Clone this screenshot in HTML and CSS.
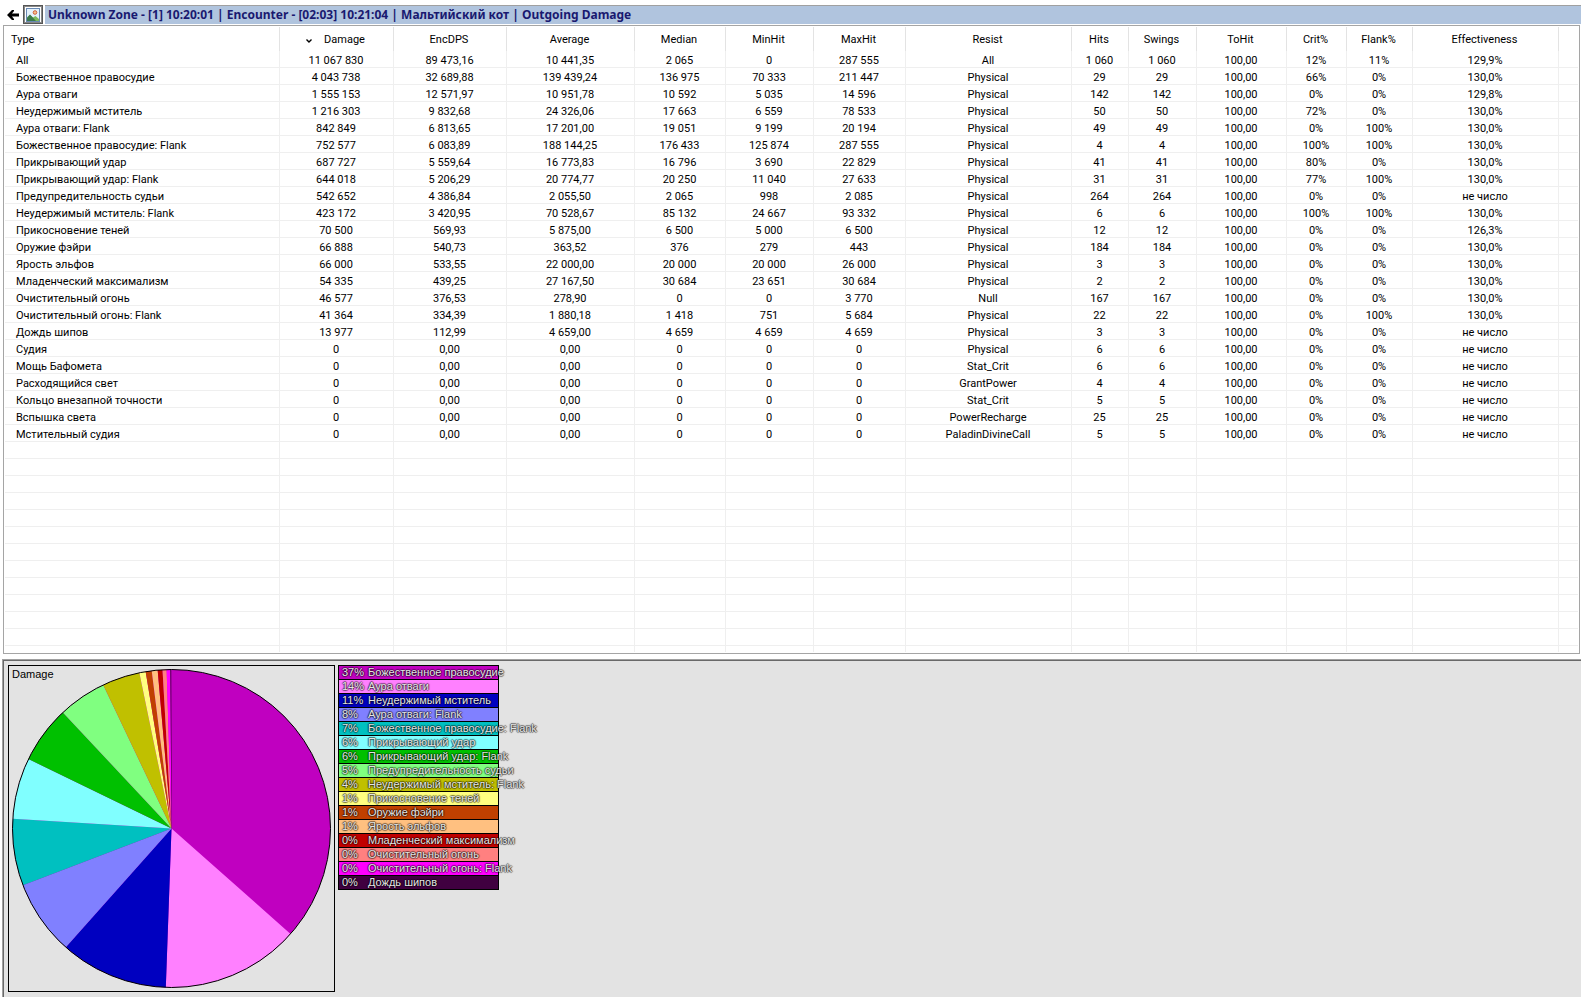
FILE: index.html
```
<!DOCTYPE html>
<html lang="ru">
<head>
<meta charset="utf-8">
<title>Outgoing Damage</title>
<link rel="stylesheet" href="styles.css">
</head>
<body>
<header class="bar">
  <button class="back" aria-label="Back"><svg width="12" height="10" viewBox="0 0 12 10"><path d="M0 5 5 0h2v1L5 3.500h7v3H5L7 9v1H5z"/></svg></button>
  <button class="picture" aria-label="Graph"><svg width="14" height="14" viewBox="0 0 14 14"><rect x=".5" y=".5" width="13" height="13" fill="#e4f1fb" stroke="#6a8ab4"/><path d="M1 10 4 7l3 2.500L9.500 8 13 11v2H1z" fill="#7cba5c"/><path d="M1 9.500 4 6.500 10 13H1z" fill="#3a7a4a"/><circle cx="9" cy="4.500" r="1.800" fill="#f6c08a" stroke="#d0603c"/></svg></button>
  <h1 class="title">Unknown Zone - [1] 10:20:01 | Encounter - [02:03] 10:21:04 | Мальтийский кот | Outgoing Damage</h1>
</header>
<main class="list">
<table class="grid">
<colgroup><col class="c-type"><col class="c-damage"><col class="c-dps"><col class="c-avg"><col class="c-med"><col class="c-min"><col class="c-max"><col class="c-resist"><col class="c-hits"><col class="c-swings"><col class="c-tohit"><col class="c-crit"><col class="c-flank"><col class="c-eff"><col></colgroup>
<thead><tr><th>Type</th><th class="sorted"><svg class="arrow" width="6" height="4" viewBox="0 0 6 4"><path d="M.5.5 3 3 5.500.5" fill="none" stroke="#000" stroke-width="1.400"/></svg>Damage</th><th>EncDPS</th><th>Average</th><th>Median</th><th>MinHit</th><th>MaxHit</th><th>Resist</th><th>Hits</th><th>Swings</th><th>ToHit</th><th>Crit%</th><th>Flank%</th><th>Effectiveness</th><th></th></tr></thead>
<tbody>
<tr><td>All<td>11 067 830<td>89 473,16<td>10 441,35<td>2 065<td>0<td>287 555<td>All<td>1 060<td>1 060<td>100,00<td>12%<td>11%<td>129,9%<td></tr>
<tr><td>Божественное правосудие<td>4 043 738<td>32 689,88<td>139 439,24<td>136 975<td>70 333<td>211 447<td>Physical<td>29<td>29<td>100,00<td>66%<td>0%<td>130,0%<td></tr>
<tr><td>Аура отваги<td>1 555 153<td>12 571,97<td>10 951,78<td>10 592<td>5 035<td>14 596<td>Physical<td>142<td>142<td>100,00<td>0%<td>0%<td>129,8%<td></tr>
<tr><td>Неудержимый мститель<td>1 216 303<td>9 832,68<td>24 326,06<td>17 663<td>6 559<td>78 533<td>Physical<td>50<td>50<td>100,00<td>72%<td>0%<td>130,0%<td></tr>
<tr><td>Аура отваги: Flank<td>842 849<td>6 813,65<td>17 201,00<td>19 051<td>9 199<td>20 194<td>Physical<td>49<td>49<td>100,00<td>0%<td>100%<td>130,0%<td></tr>
<tr><td>Божественное правосудие: Flank<td>752 577<td>6 083,89<td>188 144,25<td>176 433<td>125 874<td>287 555<td>Physical<td>4<td>4<td>100,00<td>100%<td>100%<td>130,0%<td></tr>
<tr><td>Прикрывающий удар<td>687 727<td>5 559,64<td>16 773,83<td>16 796<td>3 690<td>22 829<td>Physical<td>41<td>41<td>100,00<td>80%<td>0%<td>130,0%<td></tr>
<tr><td>Прикрывающий удар: Flank<td>644 018<td>5 206,29<td>20 774,77<td>20 250<td>11 040<td>27 633<td>Physical<td>31<td>31<td>100,00<td>77%<td>100%<td>130,0%<td></tr>
<tr><td>Предупредительность судьи<td>542 652<td>4 386,84<td>2 055,50<td>2 065<td>998<td>2 085<td>Physical<td>264<td>264<td>100,00<td>0%<td>0%<td>не число<td></tr>
<tr><td>Неудержимый мститель: Flank<td>423 172<td>3 420,95<td>70 528,67<td>85 132<td>24 667<td>93 332<td>Physical<td>6<td>6<td>100,00<td>100%<td>100%<td>130,0%<td></tr>
<tr><td>Прикосновение теней<td>70 500<td>569,93<td>5 875,00<td>6 500<td>5 000<td>6 500<td>Physical<td>12<td>12<td>100,00<td>0%<td>0%<td>126,3%<td></tr>
<tr><td>Оружие фэйри<td>66 888<td>540,73<td>363,52<td>376<td>279<td>443<td>Physical<td>184<td>184<td>100,00<td>0%<td>0%<td>130,0%<td></tr>
<tr><td>Ярость эльфов<td>66 000<td>533,55<td>22 000,00<td>20 000<td>20 000<td>26 000<td>Physical<td>3<td>3<td>100,00<td>0%<td>0%<td>130,0%<td></tr>
<tr><td>Младенческий максимализм<td>54 335<td>439,25<td>27 167,50<td>30 684<td>23 651<td>30 684<td>Physical<td>2<td>2<td>100,00<td>0%<td>0%<td>130,0%<td></tr>
<tr><td>Очистительный огонь<td>46 577<td>376,53<td>278,90<td>0<td>0<td>3 770<td>Null<td>167<td>167<td>100,00<td>0%<td>0%<td>130,0%<td></tr>
<tr><td>Очистительный огонь: Flank<td>41 364<td>334,39<td>1 880,18<td>1 418<td>751<td>5 684<td>Physical<td>22<td>22<td>100,00<td>0%<td>100%<td>130,0%<td></tr>
<tr><td>Дождь шипов<td>13 977<td>112,99<td>4 659,00<td>4 659<td>4 659<td>4 659<td>Physical<td>3<td>3<td>100,00<td>0%<td>0%<td>не число<td></tr>
<tr><td>Судия<td>0<td>0,00<td>0,00<td>0<td>0<td>0<td>Physical<td>6<td>6<td>100,00<td>0%<td>0%<td>не число<td></tr>
<tr><td>Мощь Бафомета<td>0<td>0,00<td>0,00<td>0<td>0<td>0<td>Stat_Crit<td>6<td>6<td>100,00<td>0%<td>0%<td>не число<td></tr>
<tr><td>Расходящийся свет<td>0<td>0,00<td>0,00<td>0<td>0<td>0<td>GrantPower<td>4<td>4<td>100,00<td>0%<td>0%<td>не число<td></tr>
<tr><td>Кольцо внезапной точности<td>0<td>0,00<td>0,00<td>0<td>0<td>0<td>Stat_Crit<td>5<td>5<td>100,00<td>0%<td>0%<td>не число<td></tr>
<tr><td>Вспышка света<td>0<td>0,00<td>0,00<td>0<td>0<td>0<td>PowerRecharge<td>25<td>25<td>100,00<td>0%<td>0%<td>не число<td></tr>
<tr><td>Мстительный судия<td>0<td>0,00<td>0,00<td>0<td>0<td>0<td>PaladinDivineCall<td>5<td>5<td>100,00<td>0%<td>0%<td>не число<td></tr>
</tbody>
<tbody aria-hidden="true">
<tr><td><td><td><td><td><td><td><td><td><td><td><td><td><td><td></tr>
<tr><td><td><td><td><td><td><td><td><td><td><td><td><td><td><td></tr>
<tr><td><td><td><td><td><td><td><td><td><td><td><td><td><td><td></tr>
<tr><td><td><td><td><td><td><td><td><td><td><td><td><td><td><td></tr>
<tr><td><td><td><td><td><td><td><td><td><td><td><td><td><td><td></tr>
<tr><td><td><td><td><td><td><td><td><td><td><td><td><td><td><td></tr>
<tr><td><td><td><td><td><td><td><td><td><td><td><td><td><td><td></tr>
<tr><td><td><td><td><td><td><td><td><td><td><td><td><td><td><td></tr>
<tr><td><td><td><td><td><td><td><td><td><td><td><td><td><td><td></tr>
<tr><td><td><td><td><td><td><td><td><td><td><td><td><td><td><td></tr>
<tr><td><td><td><td><td><td><td><td><td><td><td><td><td><td><td></tr>
<tr><td><td><td><td><td><td><td><td><td><td><td><td><td><td><td></tr>
<tr class="rest"><td><td><td><td><td><td><td><td><td><td><td><td><td><td><td></tr>
</tbody>
</table>
</main>
<section class="panel">
  <figure class="chart">
    <svg width="325" height="325" viewBox="0 0 325 325" role="img" aria-label="Damage">
      <g fill="none" stroke-width="159" transform="rotate(-90 162.500 162.500)">
        <circle cx="162.500" cy="162.500" r="79.500" pathLength="100" stroke="#c000c0"/>
        <circle cx="162.500" cy="162.500" r="79.500" pathLength="100" stroke="#ff80ff" stroke-dasharray="14.051 100" stroke-dashoffset="-36.536"/>
        <circle cx="162.500" cy="162.500" r="79.500" pathLength="100" stroke="#0000c0" stroke-dasharray="10.990 100" stroke-dashoffset="-50.587"/>
        <circle cx="162.500" cy="162.500" r="79.500" pathLength="100" stroke="#8080ff" stroke-dasharray="7.615 100" stroke-dashoffset="-61.577"/>
        <circle cx="162.500" cy="162.500" r="79.500" pathLength="100" stroke="#00c0c0" stroke-dasharray="6.800 100" stroke-dashoffset="-69.192"/>
        <circle cx="162.500" cy="162.500" r="79.500" pathLength="100" stroke="#80ffff" stroke-dasharray="6.214 100" stroke-dashoffset="-75.992"/>
        <circle cx="162.500" cy="162.500" r="79.500" pathLength="100" stroke="#00c000" stroke-dasharray="5.819 100" stroke-dashoffset="-82.206"/>
        <circle cx="162.500" cy="162.500" r="79.500" pathLength="100" stroke="#80ff80" stroke-dasharray="4.903 100" stroke-dashoffset="-88.025"/>
        <circle cx="162.500" cy="162.500" r="79.500" pathLength="100" stroke="#c0c000" stroke-dasharray="3.823 100" stroke-dashoffset="-92.928"/>
        <circle cx="162.500" cy="162.500" r="79.500" pathLength="100" stroke="#ffff80" stroke-dasharray=".637 100" stroke-dashoffset="-96.751"/>
        <circle cx="162.500" cy="162.500" r="79.500" pathLength="100" stroke="#c04000" stroke-dasharray=".604 100" stroke-dashoffset="-97.388"/>
        <circle cx="162.500" cy="162.500" r="79.500" pathLength="100" stroke="#ffc080" stroke-dasharray=".596 100" stroke-dashoffset="-97.992"/>
        <circle cx="162.500" cy="162.500" r="79.500" pathLength="100" stroke="#c00000" stroke-dasharray=".491 100" stroke-dashoffset="-98.588"/>
        <circle cx="162.500" cy="162.500" r="79.500" pathLength="100" stroke="#ff8080" stroke-dasharray=".421 100" stroke-dashoffset="-99.079"/>
        <circle cx="162.500" cy="162.500" r="79.500" pathLength="100" stroke="#ff00ff" stroke-dasharray=".374 100" stroke-dashoffset="-99.500"/>
        <circle cx="162.500" cy="162.500" r="79.500" pathLength="100" stroke="#400040" stroke-dasharray=".126 100" stroke-dashoffset="-99.874"/>
      </g>
      <circle cx="162.500" cy="162.500" r="159" fill="none" stroke="#000"/>
    </svg>
    <figcaption class="caption">Damage</figcaption>
  </figure>
  <ul class="legend">
    <li class="k1"><span>37%</span>Божественное правосудие</li>
    <li class="k2"><span>14%</span>Аура отваги</li>
    <li class="k3"><span>11%</span>Неудержимый мститель</li>
    <li class="k4"><span>8%</span>Аура отваги: Flank</li>
    <li class="k5"><span>7%</span>Божественное правосудие: Flank</li>
    <li class="k6"><span>6%</span>Прикрывающий удар</li>
    <li class="k7"><span>6%</span>Прикрывающий удар: Flank</li>
    <li class="k8"><span>5%</span>Предупредительность судьи</li>
    <li class="k9"><span>4%</span>Неудержимый мститель: Flank</li>
    <li class="k10"><span>1%</span>Прикосновение теней</li>
    <li class="k11"><span>1%</span>Оружие фэйри</li>
    <li class="k12"><span>1%</span>Ярость эльфов</li>
    <li class="k13"><span>0%</span>Младенческий максимализм</li>
    <li class="k14"><span>0%</span>Очистительный огонь</li>
    <li class="k15"><span>0%</span>Очистительный огонь: Flank</li>
    <li class="k16"><span>0%</span>Дождь шипов</li>
  </ul>
</section>
</body>
</html>
```
FILE: styles.css
```
* { box-sizing: border-box; }
body {
  margin: 0;
  min-height: 100vh;
  display: flex;
  flex-direction: column;
  padding: 5px 0 0 2px;
  background: #fff;
  color: #000;
  font-family: "Liberation Sans", Arial, sans-serif;
  font-size: 11px;
}
.bar { display: flex; height: 19px; margin-left: 1px; }
.bar button {
  display: flex;
  align-items: center;
  justify-content: center;
  width: 20px;
  padding: 0;
  border: 0;
  background: #fff;
}
.bar .picture { border: 1px solid #555; box-shadow: inset 0 0 0 1px #888; }
.title {
  flex: 1;
  margin: 0 0 0 2px;
  padding-left: 3px;
  border-top: 1px solid #a0a0a0;
  background: #b0c4de;
  color: #191970;
  font: bold 12px/18px "Noto Sans", Tahoma, Verdana, sans-serif;
}
.list {
  margin: 1px 1px 0 1px;
  padding: 1px;
  border: 1px solid #a5a5a5;
}
.grid {
  width: 100%;
  table-layout: fixed;
  border-collapse: separate;
  border-spacing: 0;
  font-family: Roboto, "Liberation Sans", sans-serif;
  font-size: 11px;
  white-space: nowrap;
}
.c-type { width: 275px; }
.c-damage { width: 114px; }
.c-dps { width: 113px; }
.c-avg { width: 128px; }
.c-med { width: 91px; }
.c-min { width: 88px; }
.c-max { width: 92px; }
.c-resist { width: 166px; }
.c-hits { width: 57px; }
.c-swings { width: 68px; }
.c-tohit { width: 90px; }
.c-crit { width: 60px; }
.c-flank { width: 66px; }
.c-eff { width: 146px; }
.grid th {
  height: 24px;
  padding: 0 2px 0 0;
  border-right: 1px solid #e3e3e3;
  font-weight: normal;
  text-align: center;
}
.grid td {
  height: 17px;
  padding: 3px 1px 0 0;
  border-right: 1px solid #efefef;
  border-bottom: 1px solid #efefef;
  line-height: 13px;
  text-align: center;
}
.grid th:first-child { padding-left: 6px; text-align: left; }
.grid td:first-child { padding-left: 11px; text-align: left; }
.grid th:last-child, .grid td:last-child { border-right: 0; }
.grid .rest td { height: 6px; border-bottom: 0; line-height: 0; }
.arrow { margin-right: 12px; }
.panel {
  flex: 1;
  display: flex;
  align-items: flex-start;
  gap: 3px;
  margin-top: 5px;
  padding: 5px;
  border: solid #a0a0a0;
  border-width: 1px 0 0 1px;
  box-shadow: inset 1px 1px #696969;
  background: #e3e3e3;
}
.chart { position: relative; margin: 0; border: 1px solid #000; }
.chart svg { display: block; }
.caption { position: absolute; left: 3px; top: 2px; font-size: 11px; line-height: 13px; }
.legend {
  width: 161px;
  margin: 0;
  padding: 0;
  border: solid #000;
  border-width: 1px 1px 0;
  list-style: none;
  color: #e3e3e3;
  font-size: 11px;
  line-height: 13px;
  white-space: nowrap;
  text-shadow: 1px 0 1px #0008, -1px 0 1px #0008, 0 1px 1px #0008, 0 -1px 1px #0008;
}
.legend li { display: flex; height: 14px; padding-left: 3px; border-bottom: 1px solid #000; }
.legend span { flex: 0 0 26px; }
.k1 { background: #c000c0; }
.k2 { background: #ff80ff; }
.k3 { background: #0000c0; }
.k4 { background: #8080ff; }
.k5 { background: #00c0c0; }
.k6 { background: #80ffff; }
.k7 { background: #00c000; }
.k8 { background: #80ff80; }
.k9 { background: #c0c000; }
.k10 { background: #ffff80; }
.k11 { background: #c04000; }
.k12 { background: #ffc080; }
.k13 { background: #c00000; }
.k14 { background: #ff8080; }
.k15 { background: #ff00ff; }
.k16 { background: #400040; }
```
